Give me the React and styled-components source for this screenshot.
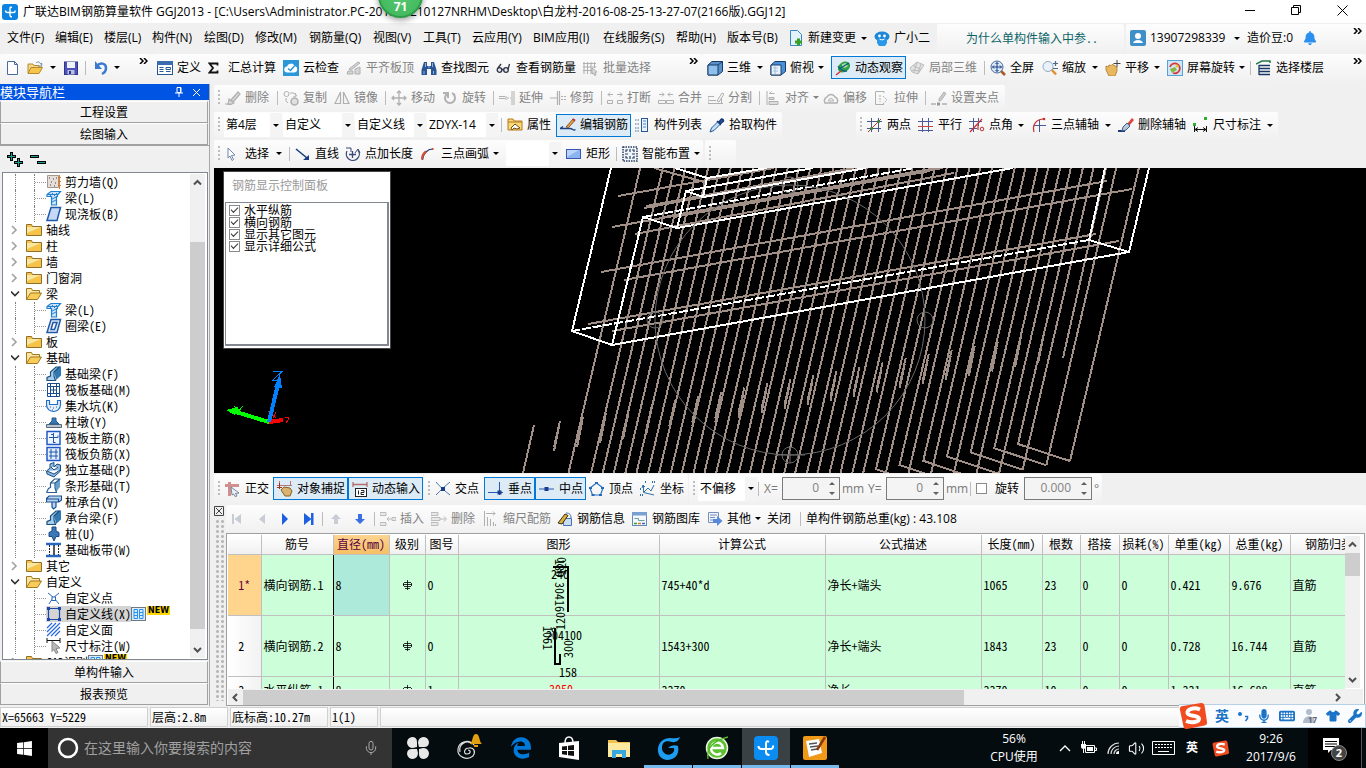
import React from "react";
import styled, { createGlobalStyle, css } from "styled-components";
import {
  FaWindows,
  FaEdgeLegacy,
  FaMicrophone,
  FaKeyboard,
  FaShirt,
  FaWrench,
  FaBell,
} from "react-icons/fa6";
import { Mic, Volume2 } from "lucide-react";

const uiFont = `"Open Sans", "Noto Sans CJK SC", sans-serif`;
const songFont = `"Noto Sans Mono CJK SC", "Liberation Serif", "Noto Sans CJK SC", monospace`;

const GlobalStyle = createGlobalStyle`
  * {
    box-sizing: border-box;
  }
  body {
    margin: 0;
    overflow: hidden;
    background: #f0f0f0;
    color: #000;
    font-family: ${uiFont};
    font-size: 12px;
    line-height: 16px;
  }
  button, input, select {
    font: inherit;
    color: inherit;
    margin: 0;
  }
`;

/* ---------- icons ---------- */

const BLUE = "#2058a8";
const GREY = "#b0b0b0";

const glyphs = {
  logo: (
    <>
      <rect width="16" height="16" rx="3" fill="#0a84e0" />
      <path d="M10 3.500q-2-1-2 1V11q0 2 2 1.800M3.500 6.500q0 2 2 2h6q2 0 1.500-2" fill="none" stroke="#fff" strokeWidth="1.400" />
    </>
  ),
  newFile: <path d="M2.500 1.500h7l3 3v10h-10zM9.500 1.500v3h3" fill="#fff" stroke="#4a6a98" />,
  open: (
    <>
      <path d="M1 13V4h5l1 1.500h5V8" fill="#f6d68a" stroke="#b88a30" />
      <path d="M1 13.500L4 7.500h11.500L12 13.500z" fill="#f5c54c" stroke="#b88a30" />
      <path d="M9 3c2-2 4-1 4.500 1l1.200-.8v3H12" fill="none" stroke="#6b87a8" />
    </>
  ),
  save: (
    <>
      <rect x="1.500" y="2" width="13" height="12.500" fill="#4c52b8" stroke="#30368c" />
      <rect x="4" y="2" width="8" height="6" fill="#f0f2fa" />
      <rect x="4.500" y="10" width="7" height="4.500" fill="#b8c0dc" />
      <rect x="6" y="11" width="2" height="3" fill="#30368c" />
    </>
  ),
  undo: (
    <>
      <path d="M4 6c3-4 9-3 9 2 0 3-2 5-4 6" fill="none" stroke="#3c7ad0" strokeWidth="2.500" />
      <path d="M2 1v8h7z" fill="#3c7ad0" />
    </>
  ),
  define: (
    <>
      <rect x=".5" y="1.500" width="15" height="13" fill="#fff" stroke="#285898" />
      <path d="M0 1h16v4H0z" fill="#3a6ab0" />
      <path d="M2.500 7.500h4M2.500 9.500h4M2.500 11.500h4M9 7.500h4.500v2H9zM9 11.500h4.500" stroke="#285898" fill="none" />
    </>
  ),
  sigma: <path d="M9.500 5.500V3.500H1.500L5 8l-3.500 4.500h8v-2" fill="none" stroke="#111" strokeWidth="1.800" />,
  cloud: (
    <>
      <rect width="16" height="16" fill="#2a98d8" />
      <path d="M4.500 12.500a3 3 0 0 1-.5-6 4 4 0 0 1 7.500-.5 3.300 3.300 0 0 1 0 6.500z" fill="#fff" />
      <path d="M5 8.500l2.500 2 4-4.500" fill="none" stroke="#2a98d8" strokeWidth="1.500" />
    </>
  ),
  slabDim: <path d="M1 14h6v-3H2zM3 9l9-7 2 1-9 7zM9 9v5h5V7z" fill="#d4d4d4" stroke="#b0b0b0" />,
  binoculars: (
    <>
      <path d="M3 2h3v4h4V2h3l2.500 8v5H10V9H6v6H.5v-5z" fill="#2a5694" />
      <path d="M3 11v3M12.500 11v3M4.500 3v4M11.500 3v4M7 7h2" stroke="#8ab4e8" />
    </>
  ),
  glasses: (
    <>
      <circle cx="3.500" cy="10" r="2.300" fill="#dce8f4" stroke="#334" strokeWidth="1.300" />
      <circle cx="10" cy="10" r="2.300" fill="#dce8f4" stroke="#334" strokeWidth="1.300" />
      <path d="M5.800 9.500h2M2 8l3-4M12 9.500L13.500 4" stroke="#334" fill="none" strokeWidth="1.300" />
    </>
  ),
  gridDim: (
    <>
      <path d="M1 2v12M4.500 2v12M8 2v12M11.500 2v6M0 3.500h13M0 7h13M0 10.500h9" stroke={GREY} fill="none" />
      <path d="M9 8l5 4-2 .5 1 2.500-1.500.5-1-2.500L9 14z" fill="#ddd" stroke="#999" strokeWidth=".7" />
    </>
  ),
  cube: (
    <>
      <path d="M1 5l4-3.500h10.500v10L11 15H1z" fill="#5a90cc" stroke="#183c68" />
      <path d="M1 5h10v10H1z" fill="#8fc0ec" stroke="#183c68" />
      <path d="M11 5l4.500-3.500" stroke="#183c68" />
    </>
  ),
  cubeTop: (
    <>
      <path d="M1 5l4-3.500h10.500v10L11 15H1z" fill="#4a90d8" stroke="#183c68" />
      <path d="M1 5h10v10H1z" fill="#eaf3fc" stroke="#183c68" />
      <path d="M3 8h5M3 11h5M5 6v8" stroke="#a0c0e0" />
    </>
  ),
  orbit: (
    <>
      <ellipse cx="9" cy="7" rx="6.500" ry="5" fill="#2fa048" transform="rotate(-35 9 7)" />
      <path d="M7 4l4-1 2 3-3 2-3-1z" fill="#a8e0a0" />
      <path d="M3 6c2 3 5 6 9 5M4 9l10-6" stroke="#0c5a88" strokeWidth="1.200" fill="none" />
      <path d="M1 15l5-4" stroke="#d03030" strokeWidth="1.500" />
    </>
  ),
  partDim: (
    <path d="M1 8l7-6 7 3-6 9-6-2zM4 5.500l8 4M3 10l8 1M8 2L5 12M12 4L9 13" fill="#e4e4e4" stroke="#bbb" />
  ),
  zoomAll: (
    <>
      <path d="M10.500 10.500l4.500 4.500" stroke="#a85820" strokeWidth="2.500" />
      <circle cx="7" cy="7" r="6" fill="#dceafa" stroke="#486898" />
      <path d="M7 2.500v9M2.500 7h9M5.500 4L7 2.500 8.500 4M5.500 10L7 11.500 8.500 10M4 5.500L2.500 7 4 8.500M10 5.500L11.500 7 10 8.500" stroke="#183c80" fill="none" />
    </>
  ),
  zoom: (
    <>
      <path d="M9.500 9.500l4.500 5" stroke="#e09030" strokeWidth="2.500" />
      <circle cx="6" cy="6.500" r="5" fill="#e8f2fc" stroke="#98a8b8" />
      <path d="M11 3.500h5M13.500 1v5M11 8.500h5" stroke="#486890" strokeWidth="1.200" />
    </>
  ),
  hand: (
    <>
      <path d="M1 6l2 1 1-2 2 .5 1-1 2 .5 1 1 2 1v4l-2 5H4L1 10z" fill="#e8b860" stroke="#a87828" strokeWidth=".8" />
      <path d="M12 0v7M8.500 3.500h7" stroke="#444" />
    </>
  ),
  screenRotate: (
    <>
      <rect x=".5" y=".5" width="15" height="15" fill="#cfe6f8" stroke="#58a0d8" />
      <path d="M3 7a5 5 0 1 1 3 6" fill="none" stroke="#d83838" strokeWidth="1.800" />
      <path d="M3 9l5-2 2 3-5 3z" fill="#88b840" />
      <circle cx="10" cy="6" r="1.500" fill="#e8c830" />
    </>
  ),
  floors: (
    <>
      <path d="M0 4l6-3h8v2" fill="none" stroke="#287848" strokeWidth="1.500" />
      <path d="M3 5.500h11M3 8.500h11M3 11.500h11M3 14.500h11M3 5v10" stroke="#183868" strokeWidth="1.300" />
    </>
  ),
  docAdd: (
    <>
      <path d="M2.500.5h7l4 4v11h-11z" fill="#e4f2fc" stroke="#3888c8" />
      <path d="M10.500 8.500v7M7 12h7" stroke="#38a028" strokeWidth="3" />
    </>
  ),
  mascot: (
    <>
      <ellipse cx="8" cy="6.500" rx="7.500" ry="5" fill="#1e88d8" />
      <path d="M3 9h10v4l-2 3H5l-2-3z" fill="#2898e8" />
      <circle cx="5.500" cy="6" r="1.400" fill="#fff" />
      <circle cx="10.500" cy="6" r="1.400" fill="#fff" />
      <path d="M5.500 9q2.500 2 5 0" stroke="#fff" fill="none" />
    </>
  ),
  user: (
    <>
      <rect width="16" height="16" rx="2" fill="#3f90c8" />
      <circle cx="8" cy="6" r="3" fill="#fff" />
      <path d="M3 13c1-4 9-4 10 0z" fill="#fff" />
    </>
  ),
  brushDim: <path d="M0 14h7M6 10l7-8 2 2-7 8zM4 9l5 4-3 1.500H3z" fill="#d8d8d8" stroke={GREY} strokeWidth="1.200" />,
  copyDim: (
    <>
      <circle cx="3.500" cy="4" r="2.500" fill="none" stroke={GREY} />
      <circle cx="11.500" cy="11.500" r="3.500" fill="#e0e0e0" stroke={GREY} strokeWidth="1.500" />
      <path d="M7 3h4l2 2.500M12 3l1.500 3-3 .5M3 8v3l2 2" fill="none" stroke={GREY} />
    </>
  ),
  mirrorDim: <path d="M1 13.500L6.500 2v11.500zM9.500 2L15 13.500H9.500z" fill="none" stroke={GREY} strokeWidth="1.200" />,
  moveDim: <path d="M8 1v14M1 8h14M6 3l2-2 2 2M6 13l2 2 2-2M3 6L1 8l2 2M13 6l2 2-2 2" fill="none" stroke={GREY} strokeWidth="1.300" />,
  rotateDim: <path d="M5 4a5 5 0 1 0 6 0M6 8V3H1M10 3l3 2" fill="none" stroke={GREY} strokeWidth="2" />,
  extendDim: <path d="M0 8.500h6M0 6.500h6M8 8h2M11 8h1M13 1v14M15 1v14M7 6v4" fill="none" stroke={GREY} />,
  trimDim: <path d="M0 8h7M7.500 1v14M9.500 1v14M11 6.500h2M14 6.500h2M11 9.500h2M14 9.500h2" fill="none" stroke={GREY} strokeWidth="1.200" />,
  breakDim: <path d="M1 4.500h5M10 4.500h5M3 2.500L1 4.500l2 2M13 2.500l2 2-2 2M.5 10.500h5v3h-5zM10.500 10.500h5v3h-5z" fill="none" stroke={GREY} />,
  mergeDim: <path d="M1 4.500h5M10 4.500h5M4 2.500l2 2-2 2M12 2.500l-2 2 2 2M.5 10.500h7v3h-7zM8.500 10.500h7v3h-7z" fill="none" stroke={GREY} />,
  splitDim: <path d="M0 6.500h6M0 13.500h15M0 6.500v7M9 11l5-8 2 1-5 8zM13.500 8v5M1 10.500h7" fill="none" stroke={GREY} />,
  alignDim: <path d="M2 1v14M4.500 3.500h5M4.500 3.500l2-2M4 7.500h5v2H4zM4 11.500h9v3H4z" fill="#ddd" stroke={GREY} />,
  offsetDim: (
    <>
      <path d="M2 13a4 4 0 0 1 2-6 4.500 4.500 0 0 1 8 0 4 4 0 0 1 2 6z" fill="none" stroke={GREY} strokeWidth="1.500" />
      <path d="M5.500 11a2.500 2.500 0 0 1 5 0z" fill="none" stroke={GREY} />
    </>
  ),
  stretchDim: (
    <>
      <path d="M10 3V1.500H1.500v13H10" fill="none" stroke={GREY} />
      <path d="M6 5v7M9 6l4 4M9 14l4-4" fill="none" stroke={GREY} strokeDasharray="2 1" />
    </>
  ),
  gripDim: (
    <>
      <path d="M0 14h5M11 14h5" stroke={GREY} strokeWidth="1.500" />
      <rect x="6" y="12.500" width="3" height="3" fill="#999" />
      <path d="M8 9l5-7 2 1.500-5 7-2 .5z" fill="#ccc" stroke={GREY} />
    </>
  ),
  props: (
    <>
      <path d="M1 13V2h5l1 2h8v9z" fill="#f8d878" stroke="#b87818" />
      <path d="M1 5h14" stroke="#b87818" />
      <path d="M4 11l4-4 5 4-3 1-3-1-2 2z" fill="#fff" stroke="#705018" />
    </>
  ),
  editBar: (
    <>
      <path d="M0 11.500h10c3 0 3 3 5.500 1M0 11.500l3-2" fill="none" stroke="#204080" strokeWidth="1.300" />
      <path d="M6 10l7-8 2 1.500-6.500 7z" fill="#e8a040" stroke="#704020" strokeWidth=".8" />
      <path d="M12.500 2l2.500 1.500" stroke="#c03030" strokeWidth="2" />
    </>
  ),
  listPane: (
    <>
      <path d="M1 3h4M1 7h4M1 11h4M1 14h4" stroke="#487098" strokeDasharray="1.500 1" />
      <rect x="7.500" y="1.500" width="6" height="13" fill="#e8f2fc" stroke="#285898" />
      <path d="M9 4h3M9 7h3M9 10h3" stroke="#4880c8" />
    </>
  ),
  dropper: (
    <>
      <path d="M1 15l1.500-4L9 4.500l2.500 2.500L5 13.500z" fill="#bfe0f8" stroke="#285898" />
      <path d="M8 4l4 4M9.500 5.500l3-3.500a1.800 1.800 0 0 1 2 2L11 7z" fill="#2858a0" stroke="#183878" strokeWidth="1.500" />
    </>
  ),
  axisTwo: (
    <>
      <path d="M0 4.500h15M0 11.500h14M4.500 1v14M11.500 1v14" stroke="#4a5a88" />
      <path d="M1 15L14 2" stroke="#c83030" />
      <circle cx="4.500" cy="11.500" r="1.500" fill="#308838" />
      <circle cx="11.500" cy="4.500" r="1.500" fill="#308838" />
    </>
  ),
  axisPar: (
    <>
      <path d="M0 4.500h15M4.500 1v14M10.500 1v14M0 13.500h15" stroke="#4a5a98" />
      <path d="M0 9.500h15" stroke="#c84848" />
    </>
  ),
  axisAngle: (
    <>
      <path d="M0 4.500h13M0 11.500h8M4.500 1v14M9.500 1v8" stroke="#4a5a98" />
      <path d="M1 15L13 2M9 8v5" stroke="#c83030" strokeWidth="1.200" />
      <circle cx="13" cy="12" r="1.800" fill="none" stroke="#c83030" />
    </>
  ),
  axisThree: (
    <>
      <path d="M3 8.500h12M8.500 3v12" stroke="#4a5a98" />
      <path d="M3 15C1 8 5 2 13 2" fill="none" stroke="#c83030" strokeWidth="1.200" />
      <circle cx="13" cy="2" r="1.300" fill="#c83030" />
    </>
  ),
  brush: (
    <>
      <path d="M0 14h7" stroke="#203878" strokeWidth="2" />
      <path d="M9 7l5-6 2 2-5 6z" fill="#d84838" />
      <path d="M5 10l4-4 3 3-4 4-4 1z" fill="#b8c8d8" stroke="#386090" />
    </>
  ),
  dim: (
    <>
      <path d="M1.500 9v6M13.500 9v6M2 12.500h11" stroke="#111" />
      <path d="M5 10.500l-3 2 3 2M10 10.500l3 2-3 2" fill="none" stroke="#111" />
      <path d="M0 7.500h3M11 1.500h3" stroke="#30b030" strokeWidth="3" />
    </>
  ),
  cursor: <path d="M3 2l7 7-3.500.5 2 4-1.500 1-2-4.500L3 12z" fill="#fff" stroke="#7088a8" />,
  line: (
    <>
      <path d="M1 3l11 9" stroke="#183c80" strokeWidth="1.600" />
      <path d="M14 9v5H8z" fill="#183c80" />
    </>
  ),
  arcLen: (
    <>
      <path d="M2 5a6.500 6.500 0 1 0 11-1M7.500 5v7M4 8.500h7" fill="none" stroke="#384878" strokeWidth="1.300" />
      <path d="M1 2h5v4M10 7l3-4 2 4" fill="none" stroke="#384878" />
    </>
  ),
  arc: (
    <>
      <path d="M1.500 14C2 8 6 3 12 3" fill="none" stroke="#283c80" strokeWidth="1.200" />
      <path d="M1 13.500C1 9 3 7 5 5.500M11 3h1.500" fill="none" stroke="#d05038" strokeWidth="2.200" />
    </>
  ),
  rect: (
    <>
      <rect x=".5" y="3.500" width="14" height="9" fill="#8cb4f0" stroke="#3858b0" />
      <path d="M1 11L13 4H1z" fill="#bcd4fa" />
    </>
  ),
  smart: (
    <>
      <rect x="1" y="1" width="14" height="14" fill="#eef4fa" stroke="#283c60" strokeWidth="1.500" strokeDasharray="1.500 1" />
      <path d="M4 6V4h2M10 4h2v2M4 10v2h2M10 12h2v-2M8 3v3M8 10v3M3 8h3M10 8h3" fill="none" stroke="#283c60" strokeWidth="1.200" />
    </>
  ),
  ortho: (
    <>
      <path d="M0 4.500h14M4.500 1v14" stroke="#d09090" strokeWidth="3" />
      <path d="M6 6l8 6-3.500.5L12 15l-2 .5L8.500 13 7 14z" fill="#e8f0f8" stroke="#788898" />
    </>
  ),
  snapHand: (
    <>
      <path d="M2.500 0v8M13.500 0v5M0 4.500h15" stroke="#b07878" />
      <path d="M4 9l3-3 6 1 2 3-2 5H8z" fill="#d8b470" stroke="#886020" />
      <path d="M2.500 2v6M0 6.500h5" stroke="#a03020" />
    </>
  ),
  dynInput: (
    <>
      <path d="M1 1v5M1 3.500h14M15 1v5" stroke="#b07070" strokeWidth="1.300" />
      <rect x="3.500" y="7.500" width="11" height="8" fill="#fff" stroke="#222" />
      <path d="M6.500 9.500v4M9 9.500h3v2H9v2h3" stroke="#222" fill="none" />
    </>
  ),
  cross: (
    <>
      <path d="M1 1c4 5 9 9 14 13M15 1C10 5 5 10 1 14" stroke="#4878a8" fill="none" />
      <rect x="6" y="6" width="4" height="4" fill="#183c90" />
    </>
  ),
  perp: (
    <>
      <path d="M0 11.500h15M11.500 1v13" stroke="#2858b0" />
      <rect x="9.500" y="9.500" width="4" height="4" fill="#183c90" />
    </>
  ),
  mid: (
    <>
      <path d="M0 8h15" stroke="#2858b0" />
      <rect x="5.500" y="6" width="4" height="4" fill="#183c90" />
    </>
  ),
  vertex: (
    <>
      <path d="M7.500 2L14 7l-2.500 7h-8L1 7z" fill="none" stroke="#2878c0" strokeWidth="1.200" />
      <path d="M6 2h3M0 7h3M12 7h3M2.500 14h3M10 14h3" stroke="#2868b8" strokeWidth="2" />
    </>
  ),
  coord: (
    <>
      <path d="M3.500 4v7.500L14 14M4 11l4-4 3 3 3-6M3 4L2 7M3 4l2 2" fill="none" stroke="#3070a8" />
      <path d="M0 8h2M0 14h3M12 1h3M5 1h2" stroke="#3070a8" strokeWidth="2" strokeDasharray="1 1" />
    </>
  ),
  firstDim: <path d="M3 3v10h2V3zM12 3v10L5.500 8z" fill="#c8ccd4" />,
  prevDim: <path d="M11 3v10L5 8z" fill="#c8ccd4" />,
  next: <path d="M5 2v12l6-6z" fill="#1c5fe0" />,
  last: <path d="M2 2v12l7.500-6zM9 2h2.500v12H9z" fill="#1c5fe0" />,
  upDim: <path d="M8 3l5 5h-3v5H6V8H3z" fill="#c8ccd4" />,
  down: <path d="M8 13L3 8h3V3h4v5h3z" fill="#3a70e0" />,
  insertDim: <path d="M0 1.500h6v3H0zM0 11.500h6v3H0zM7 8h5M9 6L7 8l2 2M12 6.500h4v3h-4z" fill="#e8e8e8" stroke="#bcbcbc" />,
  removeDim: <path d="M0 1.500h7v3H0zM0 6.500h9v3H0zM0 11.500h7v3H0zM9 8h5M13 5.500l2.500 2.500L13 10.500" fill="#e8e8e8" stroke="#bcbcbc" />,
  scaleDim: <path d="M1.500 0v15M3 2.500h9M10 .5l2 2-2 2M4.500 6v9M7.500 8v7M10.500 11v4M12.500 13v2" fill="none" stroke={GREY} />,
  barInfo: (
    <>
      <path d="M6.500 7.500h8v7h-8z" fill="#c8dcf4" stroke="#4870b0" />
      <path d="M1 12L8 3l3 1.500L5 13z" fill="#d8b040" stroke="#403010" />
      <path d="M9 2c4 0 5 2 5 5" fill="none" stroke="#4870b0" />
    </>
  ),
  barLib: (
    <>
      <rect x=".5" y="1.500" width="14" height="13" fill="#f4f8fc" stroke="#6888b0" />
      <path d="M0 1h15v3.500H0z" fill="#78a0d0" />
      <path d="M2.500 7.500h4v2h6" fill="none" stroke="#68a0a0" />
      <path d="M2 12.500h3" stroke="#30a040" strokeWidth="1.500" />
      <path d="M6 12.500h3" stroke="#e07820" strokeWidth="1.500" />
      <path d="M10 12.500h3" stroke="#3868d0" strokeWidth="1.500" />
    </>
  ),
  other: (
    <>
      <path d="M1.500 1.500h10v10h-10z" fill="#eef4fc" stroke="#7890b8" />
      <path d="M3 4h7M3 6.500h5M3 9h4" stroke="#7890b8" />
      <path d="M6 8h4V5l5.500 5-5.500 5v-3H6z" fill="#5a88dc" />
    </>
  ),
  /* tree */
  wallDots: (
    <>
      <path d="M1.500 1.500h11v12h-11z" fill="#e4ddd8" stroke="#a09890" />
      <path d="M3 4h1M7 5h1M5 8h1M9 9h1M4 11h1M10 4h1M8 12h1" stroke="#444" />
      <path d="M13.500 1v14M12 3.500h3M12 7.500h3M12 11.500h3" stroke="#e07820" />
    </>
  ),
  beam: (
    <>
      <path d="M1 4.500L5 1.500h9.500L11.500 5v1.500h-1V15h-5V6.500H1z" fill="#cfe4fa" stroke="#2080d0" strokeWidth="1.200" />
      <path d="M1.500 4.500h10L14 2M6 9l4-2M6 12l4-2M4 6l3-3M8 6l3-3" fill="none" stroke="#2080d0" />
    </>
  ),
  slab: <path d="M5 1.500h9.500L11 14.500H1z" fill="#c4d8f8" stroke={BLUE} strokeWidth="1.500" />,
  ring: (
    <path d="M5 1.500h9.500L11 14.500H1zM7 4.500h4L8.500 11.500H5z" fill="#dce8fa" fillRule="evenodd" stroke={BLUE} strokeWidth="1.500" />
  ),
  foundBeam: (
    <>
      <path d="M8 4.500L13 .5h2v9L10 14z" fill="#2f78b0" />
      <path d="M1 14.500v-3l3.500-1.500V6L10 1h3L8 6v4l1.500 4.500z" fill="#a8cdea" stroke="#1a5080" strokeWidth="1.200" />
    </>
  ),
  raft: (
    <path d="M1.500 1.500h12v13h-12zM4.500 4.500h6v7h-6zM4.500 2v12M10.500 2v12M2 4.500h11M2 11.500h11M7.500 4v8M4 8h7" fill="none" stroke="#1c4c90" />
  ),
  pit: (
    <>
      <path d="M.5 2.500h3v4h8v-4h3v4c0 5-4 7-7 7s-7-2-7-7z" fill="#e4eefa" stroke="#2070c8" strokeWidth="1.200" />
      <path d="M4 9h1M7 10h1M10 9h1M6 12h1" stroke="#2060a8" />
    </>
  ),
  pier: (
    <>
      <path d="M.5 10.500h15v3H.5z" fill="#b8c4d0" stroke="#586878" />
      <path d="M3 10l3-3V4h4v3l3 3z" fill="#3878b8" stroke="#285888" />
    </>
  ),
  rebarMain: (
    <>
      <rect x="1" y="1.500" width="13" height="13" fill="#f0f6ff" stroke="#2058c8" strokeWidth="1.500" />
      <path d="M7.500 3v10M3 7.500h9v-2M7.500 12.500h2M5 4.500h2" fill="none" stroke="#2058a8" />
    </>
  ),
  rebarNeg: (
    <>
      <rect x="1" y="1.500" width="13" height="13" fill="#e4eefa" stroke="#2058c8" strokeWidth="1.500" />
      <path d="M5 3v10M10 3v10M3 6h9M3 10h9" fill="none" stroke="#2058a8" />
    </>
  ),
  isolated: <path d="M.5 9L4 6V2l4-1.500V5l3-3 3.500 1v6L8 15l-7-3zM1 9l7 3 6-4M5 5l3 3 4-3" fill="#8cb8e0" stroke="#1a5080" />,
  strip: (
    <>
      <path d="M9 5l5-4v8l-4 5z" fill="#6aa0cc" />
      <path d="M.5 14.500l2-4 2-1V5l4-4h6M9 5l5-4M4.500 5H9v5l1.500 4.500H.5" fill="none" stroke="#2a5c90" strokeWidth="1.200" />
    </>
  ),
  cap: <path d="M.5 4.500L3 2h12.500v4L13 8H.5zM.5 5h12v3M6 8v5l1.500 2L10 13V8" fill="#b8d4f0" stroke="#1a5090" strokeWidth="1.200" />,
  pile: <path d="M6 1h4v4l3 1.500v4H10L8 15l-2-4.500H3v-4L6 5z" fill="#3c78b8" stroke="#1a4880" />,
  band: (
    <>
      <path d="M0 2h15M0 14h15" stroke="#2868c0" strokeWidth="2.500" />
      <path d="M3.500 3v10M12.500 3v10" stroke="#222" strokeDasharray="2 1" />
      <path d="M8 3v10" stroke="#222" strokeWidth="1.500" />
    </>
  ),
  point: (
    <>
      <path d="M2 3c4 3 8 7 11 11M13 3C9 6 5 10 3 14" fill="none" stroke="#2868b8" />
      <rect x="6" y="7" width="3.500" height="3.500" fill="#fff" stroke="#2868b8" />
    </>
  ),
  poly: (
    <>
      <path d="M2.500 2.500h11v11h-11z" fill="none" stroke="#1c48a8" strokeWidth="1.200" />
      <path d="M1 2.500h3M12 2.500h3M1 13.500h3M12 13.500h3" stroke="#1c48a8" strokeWidth="3" />
    </>
  ),
  hatch: <path d="M1 6l5-5M1 10l9-9M1 14L14 1M5 14l9-9M9 14l5-5" stroke="#2868e0" strokeWidth="1.200" />,
  dimPick: (
    <>
      <path d="M1 0v5M14 0v5M1 2.500h13" stroke="#111" />
      <path d="M6 3l8 7-4 .5 2 4-2 1-2-4-2 2z" fill="#b8b8b8" stroke="#888" />
    </>
  ),
  folder: (
    <>
      <path d="M.5 13.500v-11h5l1 2h9v9z" fill="#f4c348" stroke="#907028" />
      <path d="M1 11V5h14z" fill="#fbe6a0" />
    </>
  ),
  folderOpen: (
    <>
      <path d="M.5 13.500v-11h5l1 2h7v3" fill="#fbe4a0" stroke="#a07820" />
      <path d="M.5 13.500l4-6.500h11l-4 6.500z" fill="#f9cc58" stroke="#a07820" />
    </>
  ),
  book: (
    <>
      <rect x=".5" y="1.500" width="14" height="13" fill="#d8ecfc" stroke="#707880" />
      <path d="M3 3.500h3.500v9H3zM8.500 3.500H12v9H8.500zM3 6.500h3M9 6.500h3M3 9.500h3M9 9.500h3" stroke="#2890f0" fill="none" />
    </>
  ),
};

const Svg = styled.svg`
  flex: none;
  display: block;
`;

const Icon = ({ name, size = 16 }) => (
  <Svg width={size} height={size} viewBox="0 0 16 16" aria-hidden="true">
    {glyphs[name]}
  </Svg>
);

/* ---------- shared toolbar parts ---------- */

const Toolbar = styled.div`
  display: flex;
  align-items: center;
  height: ${(p) => p.$h}px;
  padding-bottom: ${(p) => p.$pb || 0}px;
  overflow: hidden;
`;

const Strip = styled.div`
  display: flex;
  align-items: center;
  align-self: stretch;
  margin: 1px 0;
  padding-left: ${(p) => p.$pad || 0}px;
  ${(p) => p.$ml && `margin-left: ${p.$ml}px;`}
  ${(p) => p.$w && `width: ${p.$w}px;`}
  ${(p) => p.$grow && "flex: 1;"}
  background: linear-gradient(#fdfdfd, #f1f1f1);
  border-radius: 2px;
  white-space: nowrap;
`;

const Grip = styled.span`
  flex: none;
  width: 2px;
  height: 16px;
  margin: 0 ${(p) => p.$gap || 5}px 0 4px;
  background: repeating-linear-gradient(#bdbdbd 0 2px, transparent 2px 4px);
`;

const Separator = styled.span`
  flex: none;
  width: 1px;
  height: 14px;
  margin-right: 5px;
  background: #bcbcbc;
`;

const ToolButton = styled.button`
  flex: none;
  display: flex;
  align-items: center;
  gap: 4px;
  height: 23px;
  padding: 0;
  width: ${(p) => p.$w}px;
  border: 0;
  background: none;
  white-space: nowrap;
  text-align: left;
  ${(p) => p.$dim && "color: #838383;"}
  ${(p) =>
    p.$on &&
    css`
      padding-left: 3px;
      border: 1px solid #0078d7;
      background: #dcebf6;
    `}
`;

const Space = styled.span`
  flex: none;
  width: ${(p) => p.$w}px;
`;

const Caret = styled.span`
  margin: 0 ${(p) => (p.$flush ? 2 : 7)}px 0 auto;
  border: 3px solid transparent;
  border-top-color: ${(p) => (p.$dim ? "#838383" : "#000")};
  border-bottom: 0;
`;

const MoreButton = styled.button`
  align-self: flex-start;
  margin: 4px 4px 0 auto;
  padding: 0;
  border: 0;
  background: none;
`;

const More = () => (
  <MoreButton aria-label="更多">
    <Svg width="9" height="6" viewBox="0 0 9 6">
      <path d="M1 0l3 3-3 3M5 0l3 3-3 3" fill="none" stroke="#000" strokeWidth="1.500" />
    </Svg>
  </MoreButton>
);

const ComboWrap = styled.label`
  position: relative;
  flex: none;
  display: flex;
  align-items: center;
  width: ${(p) => p.$w}px;
  height: 24px;
  margin-right: 1px;
  background: linear-gradient(to left, #f4f4f4 0 12px, #fff 12px);

  select {
    width: 100%;
    height: 24px;
    padding: 0 0 0 2px;
    border: 0;
    background: none;
    appearance: none;
  }
  span {
    position: absolute;
    right: 3px;
    margin: 0;
  }
`;

const Combo = ({ value, label, w }) => (
  <ComboWrap $w={w}>
    <select aria-label={label}>
      <option>{value}</option>
    </select>
    <Caret />
  </ComboWrap>
);

// "|" is a divider and a bare number is a gap
const Tools = ({ items }) =>
  items.map((item, i) => {
    if (item === "|") return <Separator key={i} />;
    if (typeof item === "number") return <Space key={i} $w={item} />;
    return (
      <ToolButton key={i} $w={item.w} $dim={item.dim} $on={item.on}>
        {item.icon && <Icon name={item.icon} />}
        {item.text}
        {item.menu && <Caret $dim={item.dim} $flush={item.flush} />}
      </ToolButton>
    );
  });

/* ---------- window frame ---------- */

const Page = styled.div`
  display: flex;
  flex-direction: column;
  height: 100vh;
  min-height: 600px;
`;

const TitleBar = styled.header`
  position: relative;
  display: flex;
  align-items: center;
  height: 23px;
  padding-left: 2px;
  background: #fff;

  h1 {
    margin: 0 auto 0 5px;
    font-size: 12px;
    font-weight: 400;
    white-space: nowrap;
  }
`;

const WindowButton = styled.button`
  width: 46px;
  height: 22px;
  padding: 0 2px 2px 0;
  border: 0;
  background: none;
  display: grid;
  place-items: center;
`;

const SpeedBall = styled.div`
  position: absolute;
  left: 378px;
  top: -27px;
  width: 45px;
  height: 45px;
  padding-top: 24px;
  border: 2px solid #2f9a48;
  border-radius: 50%;
  background: radial-gradient(#58c870, #3cb458);
  box-shadow: 0 2px 6px rgba(0, 0, 0, 0.4);
  color: #fff;
  font-weight: 700;
  text-align: center;
`;

const Menu = styled.nav`
  display: flex;
  align-items: center;
  height: 30px;
  padding-left: 7px;
`;

const MenuItem = styled.button`
  flex: none;
  padding: 0;
  width: ${(p) => p.$w}px;
  border: 0;
  background: none;
  text-align: left;
  white-space: nowrap;
`;

const Ticker = styled.a`
  color: #0c6468;
  font-family: ${songFont};
  text-decoration: none;
`;

const menus = [
  ["文件(F)", 48],
  ["编辑(E)", 49],
  ["楼层(L)", 48],
  ["构件(N)", 52],
  ["绘图(D)", 51],
  ["修改(M)", 54],
  ["钢筋量(Q)", 64],
  ["视图(V)", 50],
  ["工具(T)", 49],
  ["云应用(Y)", 61],
  ["BIM应用(I)", 70],
  ["在线服务(S)", 73],
  ["帮助(H)", 51],
  ["版本号(B)", 61],
];

const MenuBar = () => (
  <Menu>
    {menus.map(([label, w]) => (
      <MenuItem key={label} $w={w}>
        {label}
      </MenuItem>
    ))}
    <Tools
      items={[
        { icon: "docAdd", text: "新建变更", w: 86, menu: true },
        { icon: "mascot", text: "广小二", w: 63 },
      ]}
    />
    <Strip $w={187} $pad={29}>
      <Ticker href="#faq">为什么单构件输入中参..</Ticker>
    </Strip>
    <Strip $pad={4} $ml={2} $grow>
      <Tools
        items={[
          { icon: "user", text: "13907298339", w: 117, menu: true },
          { text: "造价豆:0", w: 56 },
        ]}
      />
      <FaBell size={14} color="#2a90f0" />
      <More />
    </Strip>
  </Menu>
);

const MainToolbar = () => (
  <Toolbar $h={31} $pb={2}>
    <Strip $pad={5} $w={152}>
      <Tools
        items={[
          { icon: "newFile", w: 22 },
          { icon: "open", w: 36, menu: true },
          { icon: "save", w: 22 },
          "|",
          2,
          { icon: "undo", w: 34, menu: true },
        ]}
      />
      <More />
    </Strip>
    <Strip $pad={5} $w={550}>
      <Tools
        items={[
          { icon: "define", text: "定义", w: 51 },
          { icon: "sigma", text: "汇总计算", w: 75 },
          { icon: "cloud", text: "云检查", w: 63 },
          { icon: "slabDim", text: "平齐板顶", w: 75, dim: true },
          { icon: "binoculars", text: "查找图元", w: 75 },
          { icon: "glasses", text: "查看钢筋量", w: 87 },
          { icon: "gridDim", text: "批量选择", w: 75, dim: true },
        ]}
      />
      <More />
    </Strip>
    <Strip $pad={5} $grow>
      <Tools
        items={[
          { icon: "cube", text: "三维", w: 63, menu: true },
          { icon: "cubeTop", text: "俯视", w: 61, menu: true },
          { icon: "orbit", text: "动态观察", w: 75, on: true },
          3,
          { icon: "partDim", text: "局部三维", w: 75, dim: true },
          "|",
          { icon: "zoomAll", text: "全屏", w: 52 },
          { icon: "zoom", text: "缩放", w: 63, menu: true },
          { icon: "hand", text: "平移", w: 62, menu: true },
          { icon: "screenRotate", text: "屏幕旋转", w: 83, menu: true },
          "|",
          { icon: "floors", text: "选择楼层", w: 75 },
        ]}
      />
      <More />
    </Strip>
  </Toolbar>
);

/* ---------- module navigator ---------- */

const Navigator = styled.aside`
  flex: none;
  display: flex;
  flex-direction: column;
  width: 210px;
  margin-right: 4px;
  padding-bottom: 1px;
  font-family: ${songFont};
  border-right: 1px solid #a8a8a8;
`;

const NavTitle = styled.div`
  display: flex;
  align-items: center;
  height: 16px;
  margin-bottom: 1px;
  background: #0054e3;
  color: #fff;
  font-size: 13px;

  svg {
    margin-right: 8px;
  }
  svg:first-of-type {
    margin-left: auto;
  }
`;

const NavButton = styled.button`
  flex: none;
  height: 22px;
  margin: 0 1px 0 0;
  padding: 0;
  border: 1px solid #a0a0a0;
  border-top-color: #fff;
  background: #f0f0f0;
`;

const ExpandBar = styled.div`
  display: flex;
  align-items: center;
  gap: 7px;
  height: 27px;
  padding: 2px 0 0 7px;
  border-top: 1px solid #a0a0a0;
`;

const TreeBox = styled.div`
  flex: 1;
  min-height: 0;
  display: flex;
  margin: 0 1px 1px 2px;
  border: 1px solid #828790;
  background: #fff;
  overflow: hidden;
`;

const Tree = styled.ul`
  flex: 1;
  margin: 1px 0 0;
  padding: 0;
  list-style: none;
  white-space: nowrap;
`;

const TreeRow = styled.li`
  display: flex;
  align-items: center;
  height: 16px;
  padding-left: ${(p) => (p.$leaf ? 12 : 8)}px;

  mark {
    background: ${(p) => (p.$selected ? "#d4d4d4" : "none")};
  }
  b {
    align-self: flex-start;
    padding: 0 1px;
    background: #ffd800;
    font: 700 8px/9px "DejaVu Sans", sans-serif;
  }
`;

const Guide = styled.span`
  flex: none;
  width: 19px;
  height: 16px;
  border-left: 1px dotted #808080;
`;

const Branch = styled.span`
  flex: none;
  width: 12px;
  height: 16px;
  border-left: 1px dotted #808080;
  background: linear-gradient(90deg, #999 50%, transparent 50%) 0 8px / 2px 1px repeat-x;
`;

const TreeIcon = styled.span`
  flex: none;
  width: ${(p) => p.$w}px;
  background: ${(p) => (p.$selected ? "#d4d4d4" : "none")};
`;

const VScroll = styled.div`
  flex: none;
  display: flex;
  flex-direction: column;
  align-items: center;
  width: 15px;
  margin: 1px 2px 1px 0;
  background: #f0f0f0;
`;

const Thumb = styled.span`
  width: 100%;
  flex: ${(p) => p.$flex};
  background: #cdcdcd;
`;

const Track = styled.span`
  flex: ${(p) => p.$flex};
`;

const ArrowMark = ({ d }) => (
  <Svg width="15" height="17" viewBox="0 0 15 17">
    <path d={d} fill="none" stroke="#505050" strokeWidth="2" />
  </Svg>
);

const UP = "M4 10.500L7.500 7 11 10.500";
const DOWN = "M4 7L7.500 10.500 11 7";
const LEFT = "M9 5L5.500 8.500 9 12";
const RIGHT = "M6 5l3.500 3.500L6 12";

const treeRows = [
  ["wallDots", "剪力墙(Q)"],
  ["beam", "梁(L)"],
  ["slab", "现浇板(B)"],
  ["+", "轴线"],
  ["+", "柱"],
  ["+", "墙"],
  ["+", "门窗洞"],
  ["-", "梁"],
  ["beam", "梁(L)"],
  ["ring", "圈梁(E)"],
  ["+", "板"],
  ["-", "基础"],
  ["foundBeam", "基础梁(F)"],
  ["raft", "筏板基础(M)"],
  ["pit", "集水坑(K)"],
  ["pier", "柱墩(Y)"],
  ["rebarMain", "筏板主筋(R)"],
  ["rebarNeg", "筏板负筋(X)"],
  ["isolated", "独立基础(P)"],
  ["strip", "条形基础(T)"],
  ["cap", "桩承台(V)"],
  ["foundBeam", "承台梁(F)"],
  ["pile", "桩(U)"],
  ["band", "基础板带(W)"],
  ["+", "其它"],
  ["-", "自定义"],
  ["point", "自定义点"],
  ["poly", "自定义线(X)", "new", "selected"],
  ["hatch", "自定义面"],
  ["dimPick", "尺寸标注(W)"],
  ["+", "CAD识别", "new"],
];

const NewMark = () => (
  <>
    <Icon name="book" />
    <b>NEW</b>
  </>
);

const ModuleTree = () => (
  <Tree>
    {treeRows.map(([kind, label, isNew, selected], i) => {
      const folder = kind === "+" || kind === "-";
      return folder ? (
        <TreeRow key={i}>
          <TreeIcon $w={15}>
            <Svg width="9" height="10" viewBox="0 0 9 10">
              <path
                d={kind === "+" ? "M1 1l4 4-4 4" : "M0 2.500L4 6.500l4-4"}
                fill="none"
                stroke={kind === "+" ? "#a0a0a0" : "#303030"}
                strokeWidth="1.600"
              />
            </Svg>
          </TreeIcon>
          <TreeIcon $w={20}>
            <Icon name={kind === "+" ? "folder" : "folderOpen"} />
          </TreeIcon>
          <mark>{label}</mark>
          {isNew && <NewMark />}
        </TreeRow>
      ) : (
        <TreeRow key={i} $leaf $selected={selected}>
          <Guide />
          <Branch />
          <TreeIcon $w={19} $selected={selected}>
            <Icon name={kind} />
          </TreeIcon>
          <mark>{label}</mark>
          {isNew && <NewMark />}
        </TreeRow>
      );
    })}
  </Tree>
);

const ModuleNavigator = () => (
  <Navigator>
    <NavTitle>
      模块导航栏
      <Svg width="10" height="12" viewBox="0 0 10 12">
        <path d="M3 1.500h4v5H3zM6.500 1v6M1 7h8M5 7v4" fill="none" stroke="#fff" />
      </Svg>
      <Svg width="9" height="9" viewBox="0 0 9 9">
        <path d="M1 1l7 7M8 1L1 8" stroke="#fff" />
      </Svg>
    </NavTitle>
    <NavButton>工程设置</NavButton>
    <NavButton>绘图输入</NavButton>
    <ExpandBar>
      <Svg width="16" height="16" viewBox="0 0 16 16">
        <path d="M4.500 0v9M0 4.500h9M11.500 6v9M7 10.500h9" stroke="#000" strokeWidth="3" />
        <path d="M4.500 1v7M1 4.500h7M11.500 7v7M8 10.500h7" stroke="#20a090" />
      </Svg>
      <Svg width="16" height="16" viewBox="0 0 16 16">
        <path d="M0 4.500h9M7 10.500h9" stroke="#000" strokeWidth="3" />
        <path d="M1 4.500h7M8 10.500h7" stroke="#20a090" />
      </Svg>
    </ExpandBar>
    <TreeBox>
      <ModuleTree />
      <VScroll>
        <ArrowMark d={UP} />
        <Track $flex={51} />
        <Thumb $flex={386} />
        <Track $flex={12} />
        <ArrowMark d={DOWN} />
      </VScroll>
    </TreeBox>
    <NavButton>单构件输入</NavButton>
    <NavButton>报表预览</NavButton>
  </Navigator>
);

/* ---------- drawing area ---------- */

const Viewport = styled.section`
  position: relative;
  flex: 1;
  min-height: 0;
  background: #000;
  overflow: hidden;
`;

const Scene = styled.svg`
  display: block;
  width: 100%;
  height: 100%;
`;

const DisplayPanel = styled.fieldset`
  position: absolute;
  left: 9px;
  top: 3px;
  width: 168px;
  height: 178px;
  margin: 0;
  padding: 6px 1px 2px;
  display: flex;
  flex-direction: column;
  border: 1px solid #444;
  background: #fff;
  color: #9a9a9a;

  p {
    margin: 0 0 8px 7px;
  }
  div {
    flex: 1;
    padding: 1px 3px;
    border: 1px solid #828790;
    border-width: 1px 2px 2px 1px;
    color: #000;
    font-family: ${songFont};
  }
`;

const CheckRow = styled.label`
  display: flex;
  align-items: center;
  gap: 4px;
  height: 12px;
  line-height: 12px;
`;

const Check = styled.input.attrs({ type: "checkbox" })`
  appearance: none;
  flex: none;
  width: 11px;
  height: 11px;
  border: 1px solid #8a8a8a;
  background: #fff;

  &:checked::after {
    content: "";
    display: block;
    width: 6px;
    height: 3px;
    margin: 1px;
    border: solid #333;
    border-width: 0 0 1px 1px;
    transform: rotate(-45deg);
  }
`;

// every bar leans the same way: 0.235px left for each px down
const LEAN = 0.235;
const PITCH = 23.68;
const topOf = (x, y) => x + LEAN * y;
const count = (n) => Array.from({ length: n }, (_, i) => i);

const frontLegs = count(23).map((i) => [856 - PITCH * i, 293 + 4.3 * i]);
const backLegs = count(19).map((i) => [804 - PITCH * i, 276 + 4.2 * i]);
const lapMarks = count(22).map((i) => [830 - 23.05 * i, 165 + 4.2 * i]);

const longBars = [
  [374, 156, 882, 66],
  [398, 163, 905, 73],
  [387, 104, 893, 13],
  [410, 112, 918, 21],
  [398, 59, 729, 0],
  [421, 66, 740, 5],
  [404, 28, 560, 0],
  [432, 38, 640, 0],
  [430, 40, 650, 0],
  [450, 49, 722, 0],
  [460, 49, 716, 3],
  [440, 0, 490, 14],
];

const edges = [
  "M397 0L358 163L398 177L915 84L935 0",
  "M915 84L875 72L891 0",
  "M398 177L429 49L463 60L799 0",
  "M463 60L472 23L489 29L493 10L461 0",
  "M489 29L652 0M472 23L599 0M493 10L553 0",
];

const Model = () => (
  <Scene>
    <g stroke="#9f8f87" strokeWidth="2" fill="none" shapeRendering="crispEdges">
      {frontLegs.map((foot, i) => (
        <path key={i} d={`M${topOf(...foot)} 0L${foot.join(" ")}`} />
      ))}
      {backLegs.map((foot, i) => (
        <path key={i} d={`M${topOf(...foot)} 0L${foot.join(" ")}L${frontLegs[i].join(" ")}`} />
      ))}
      {lapMarks.map(([x, y], i) => (
        <path key={i} d={`M${x} ${y}l-6 26M${x - 1} ${y + 6}l-5 24`} />
      ))}
      {longBars.map(([x1, y1, x2, y2]) => (
        <path key={`${x1}-${y1}`} d={`M${x1} ${y1}L${x2} ${y2}`} />
      ))}
      <path d="M320 257L309 305M892 0L849 190" />
    </g>
    <g stroke="#fff" strokeWidth="2" fill="none" shapeRendering="crispEdges">
      {edges.map((d) => (
        <path key={d} d={d} />
      ))}
      <path d="M875 72L358 163M429 49L700 0" strokeDasharray="9 2" />
    </g>
    <g stroke="#6a6a6a" fill="none">
      <circle cx="576" cy="152" r="135" />
      <circle cx="576" cy="17" r="8" />
      <circle cx="576" cy="287" r="8" />
      <circle cx="441" cy="152" r="8" />
      <circle cx="711" cy="152" r="8" />
      <path d="M561 287h30M576 279v16" />
    </g>
    <g strokeWidth="4" shapeRendering="crispEdges">
      <path d="M55 254L69 252" stroke="#f00" />
      <path d="M71 249h3v3l-2 3M54 243l8 7M62 244l-3 6" stroke="#f00" strokeWidth="1" fill="none" />
      <path d="M55 254L22 244" stroke="#0f0" />
      <path d="M12 242l12-3-3 8z" fill="#0f0" />
      <path d="M20 238l9 8M29 238l-6 7" stroke="#0f0" strokeWidth="1" />
      <path d="M55 254L64 216" stroke="#0080ff" />
      <path d="M66 206l2 14-8-1z" fill="#0080ff" />
      <path d="M59 203.500h9L59 212h7" stroke="#0080ff" strokeWidth="1" fill="none" />
    </g>
  </Scene>
);

/* ---------- snap bar ---------- */

const Caption = styled.span`
  flex: none;
  width: ${(p) => p.$w}px;
  color: ${(p) => (p.$dark ? "#000" : "#7a7a7a")};
`;

const RotateToggle = styled.label`
  display: flex;
  align-items: center;
  gap: 8px;
  width: 48px;
`;

const Spin = styled.span`
  flex: none;
  display: flex;
  align-items: center;
  width: ${(p) => p.$w}px;
  height: 23px;
  margin-right: 2px;
  border: 1px solid #7a7a7a;
  background: #f4f4f4;

  input {
    flex: 1;
    min-width: 0;
    padding: 0 10px 2px 0;
    border: 0;
    background: none;
    color: #838383;
    text-align: right;
  }
  i {
    display: flex;
    flex-direction: column;
    gap: 7px;
    margin-right: 4px;
  }
  i::before,
  i::after {
    content: "";
    border: 3px solid transparent;
    border-top: 0;
    border-bottom-color: #606060;
  }
  i::after {
    border-top: 3px solid #606060;
    border-bottom: 0;
  }
`;

const SpinBox = ({ label, value, w }) => (
  <Spin $w={w}>
    <input aria-label={label} defaultValue={value} />
    <i />
  </Spin>
);

const SnapBar = () => (
  <Toolbar $h={31}>
    <Strip>
      <Grip />
      <Tools
        items={[
          { icon: "ortho", text: "正交", w: 48 },
          { icon: "snapHand", text: "对象捕捉", w: 75, on: true },
          { icon: "dynInput", text: "动态输入", w: 75, on: true },
        ]}
      />
    </Strip>
    <Strip $ml={1}>
      <Grip />
      <Tools
        items={[
          { icon: "cross", text: "交点", w: 49 },
          { icon: "perp", text: "垂点", w: 51, on: true },
          { icon: "mid", text: "中点", w: 51, on: true },
          3,
          { icon: "vertex", text: "顶点", w: 51 },
          { icon: "coord", text: "坐标", w: 48 },
        ]}
      />
    </Strip>
    <Strip $ml={1}>
      <Grip $gap={3} />
      <Combo label="偏移方式" value="不偏移" w={59} />
      <Separator />
      <Caption $w={18}>X=</Caption>
      <SpinBox label="X" value="0" w={58} />
      <Caption $w={26}>mm</Caption>
      <Caption $w={18}>Y=</Caption>
      <SpinBox label="Y" value="0" w={58} />
      <Caption $w={24}>mm</Caption>
      <Separator />
      <RotateToggle>
        <Check />
        旋转
      </RotateToggle>
      <SpinBox label="旋转角度" value="0.000" w={68} />
      <Caption $w={8}>°</Caption>
    </Strip>
  </Toolbar>
);

/* ---------- rebar table ---------- */

const EditPane = styled.section`
  flex: none;
  display: flex;
  height: 202px;
`;

const DockGrip = styled.div`
  flex: none;
  width: 12px;
  padding-top: 2px;

  &::after {
    content: "";
    display: block;
    width: 10px;
    height: 182px;
    margin: 3px 0 0 1px;
    background: radial-gradient(#b8b8b8 1px, transparent 2px) 0 0 / 5px 5px;
  }
`;

const EditMain = styled.div`
  flex: 1;
  min-width: 0;
  display: flex;
  flex-direction: column;
`;

const Sheet = styled.div`
  flex: 1;
  min-height: 0;
  display: grid;
  grid-template: 1fr 16px / 1fr 18px;
  margin-right: 1px;
  padding: 1px 1px 0;
  border: 1px solid #a0a0a0;
  background: #fff;
`;

const Clip = styled.div`
  overflow: hidden;
`;

const Table = styled.table`
  width: 1140px;
  table-layout: fixed;
  border-collapse: collapse;
  font-family: ${songFont};

  th,
  td {
    padding: 0 2px;
    border: solid #c0c0c0;
    border-width: 0 1px 1px 0;
    font-weight: 400;
    text-align: left;
    white-space: nowrap;
  }
  td {
    background: #ccffd9;
  }
  thead th {
    height: 19px;
    text-align: center;
    background: linear-gradient(#fff, #f0f0f0);
  }
  td:nth-child(2) {
    border-right-color: #000;
  }
  thead th:nth-child(3) {
    background: linear-gradient(#fbd490, #f5bf64);
    color: #600040;
  }
  tbody tr {
    height: 61px;
  }
  tbody tr:last-child {
    height: 27px;
  }
  tbody th {
    padding-right: 8px;
    text-align: center;
    background: linear-gradient(90deg, #fff, #f2f2f2);
  }
  tbody tr:first-child th {
    padding-right: 2px;
    background: #ffd48c;
    color: #600040;
  }
  tbody tr:first-child td:nth-child(3) {
    background: #aeead9;
  }
  svg {
    display: block;
    overflow: visible;
    font-size: 12px;
  }
`;

const HScroll = styled.div`
  display: flex;
  align-items: center;
  background: #f0f0f0;

  span {
    height: 15px;
  }
`;

const Corner = styled.div`
  background: #f0f0f0;
`;

const GradeMark = styled.svg`
  margin: 0 auto;
`;

const columns = [
  ["", 33],
  ["筋号", 72],
  ["直径(mm)", 56],
  ["级别", 36],
  ["图号", 33],
  ["图形", 201],
  ["计算公式", 166],
  ["公式描述", 156],
  ["长度(mm)", 61],
  ["根数", 38],
  ["搭接", 39],
  ["损耗(%)", 49],
  ["单重(kg)", 61],
  ["总重(kg)", 61],
  ["钢筋归类", 78],
];

const Grade = () => (
  <GradeMark width="12" height="12" viewBox="0 0 12 12">
    <path d="M6.500 1v10M3 3.500h7M3 7.500h7M2 5.500h9M2.500 4v3M10.500 4v3M4 9.500h5" fill="none" stroke="#000" strokeWidth=".8" />
  </GradeMark>
);

const ShapeOne = () => (
  <svg width="196" height="60">
    <path d="M92 12H107V57" fill="none" stroke="#000" strokeWidth="2" />
    <text x="90" y="24">240</text>
    <text transform="translate(94 27) rotate(90)">30416</text>
    <text transform="translate(94 4) rotate(90)">180</text>
    <text transform="translate(105 20) rotate(-90)">120</text>
  </svg>
);

const ShapeTwo = () => (
  <svg width="196" height="60">
    <path d="M94 12V48H99V38" fill="none" stroke="#000" strokeWidth="2" />
    <circle cx="93" cy="14" r="2" fill="none" stroke="#000" />
    <text x="85" y="24">204100</text>
    <text transform="translate(82 10) rotate(90)">1061</text>
    <text transform="translate(104 14) rotate(-90)">120</text>
    <text transform="translate(112 42) rotate(-90)">300</text>
    <text x="98" y="61">158</text>
  </svg>
);

const ShapeThree = () => (
  <svg width="196" height="26">
    <text x="88" y="17" fill="#f00">3050</text>
  </svg>
);

const rebars = [
  ["1*", "横向钢筋.1", "8", <Grade />, "0", <ShapeOne />, "745+40*d", "净长+端头", "1065", "23", "0", "0", "0.421", "9.676", "直筋"],
  ["2", "横向钢筋.2", "8", <Grade />, "0", <ShapeTwo />, "1543+300", "净长+端头", "1843", "23", "0", "0", "0.728", "16.744", "直筋"],
  ["3", "水平纵筋.1", "8", <Grade />, "1", <ShapeThree />, "3370", "净长", "3370", "10", "0", "0", "1.331", "16.688", "直筋"],
];

const RebarTable = () => (
  <Table>
    <colgroup>
      {columns.map(([name, w]) => (
        <col key={name} width={w} />
      ))}
    </colgroup>
    <thead>
      <tr>
        {columns.map(([name]) => (
          <th key={name}>{name}</th>
        ))}
      </tr>
    </thead>
    <tbody>
      {rebars.map(([no, ...cells]) => (
        <tr key={no}>
          <th>{no}</th>
          {cells.map((cell, i) => (
            <td key={i}>{cell}</td>
          ))}
        </tr>
      ))}
    </tbody>
  </Table>
);

const EditPanel = () => (
  <EditPane>
    <DockGrip>
      <Svg width="10" height="10" viewBox="0 0 10 10">
        <path d="M.5.5h9v9h-9zM2 2l6 6M8 2L2 8" fill="none" stroke="#444" />
      </Svg>
    </DockGrip>
    <EditMain>
      <Toolbar $h={29}>
        <Strip $pad={3} $grow>
          <Tools
            items={[
              { icon: "firstDim", w: 25 },
              { icon: "prevDim", w: 23 },
              { icon: "next", w: 25 },
              { icon: "last", w: 20 },
              "|",
              { icon: "upDim", w: 24 },
              { icon: "down", w: 22 },
              "|",
              { icon: "insertDim", text: "插入", w: 51, dim: true },
              { icon: "removeDim", text: "删除", w: 52, dim: true },
              { icon: "scaleDim", text: "缩尺配筋", w: 74, dim: true },
              { icon: "barInfo", text: "钢筋信息", w: 75 },
              { icon: "barLib", text: "钢筋图库", w: 75 },
              { icon: "other", text: "其他", w: 53, menu: true, flush: true },
              7,
              { text: "关闭", w: 33 },
              "|",
            ]}
          />
          <span>单构件钢筋总重(kg) : 43.108</span>
        </Strip>
      </Toolbar>
      <Sheet>
        <Clip>
          <RebarTable />
        </Clip>
        <VScroll>
          <ArrowMark d={UP} />
          <Thumb $flex={23} />
          <Track $flex={95} />
          <ArrowMark d={DOWN} />
        </VScroll>
        <HScroll>
          <ArrowMark d={LEFT} />
          <Thumb $flex={720} />
          <Track $flex={365} />
          <ArrowMark d={RIGHT} />
        </HScroll>
        <Corner />
      </Sheet>
    </EditMain>
  </EditPane>
);

/* ---------- workspace ---------- */

const Body = styled.main`
  flex: 1;
  min-height: 0;
  display: flex;
`;

const Workspace = styled.div`
  flex: 1;
  min-width: 0;
  display: flex;
  flex-direction: column;
`;

const EditToolbar = () => (
  <Toolbar $h={27}>
    <Strip $w={791}>
      <Grip />
      <Tools
        items={[
          { icon: "brushDim", text: "删除", w: 52, dim: true },
          "|",
          { icon: "copyDim", text: "复制", w: 51, dim: true },
          { icon: "mirrorDim", text: "镜像", w: 51, dim: true },
          "|",
          { icon: "moveDim", text: "移动", w: 51, dim: true },
          { icon: "rotateDim", text: "旋转", w: 51, dim: true },
          "|",
          { icon: "extendDim", text: "延伸", w: 51, dim: true },
          { icon: "trimDim", text: "修剪", w: 51, dim: true },
          "|",
          { icon: "breakDim", text: "打断", w: 51, dim: true },
          { icon: "mergeDim", text: "合并", w: 50, dim: true },
          { icon: "splitDim", text: "分割", w: 51, dim: true },
          "|",
          { icon: "alignDim", text: "对齐", w: 58, dim: true, menu: true },
          { icon: "offsetDim", text: "偏移", w: 51, dim: true },
          { icon: "stretchDim", text: "拉伸", w: 51, dim: true },
          "|",
          { icon: "gripDim", text: "设置夹点", w: 75, dim: true },
        ]}
      />
    </Strip>
  </Toolbar>
);

const ElementToolbar = () => (
  <Toolbar $h={28}>
    <Strip $w={568}>
      <Grip $gap={4} />
      <Combo label="楼层" value="第4层" w={58} />
      <Combo label="构件类型" value="自定义" w={71} />
      <Combo label="构件" value="自定义线" w={71} />
      <Combo label="构件名称" value="ZDYX-14" w={71} />
      <Tools
        items={[
          2,
          "|",
          { icon: "props", text: "属性", w: 49 },
          { icon: "editBar", text: "编辑钢筋", w: 75, on: true },
          3,
          { icon: "listPane", text: "构件列表", w: 75 },
          { icon: "dropper", text: "拾取构件", w: 74 },
        ]}
      />
    </Strip>
    <Strip $ml={74} $w={422}>
      <Grip />
      <Tools
        items={[
          { icon: "axisTwo", text: "两点", w: 51 },
          { icon: "axisPar", text: "平行", w: 51 },
          { icon: "axisAngle", text: "点角", w: 62, menu: true },
          { icon: "axisThree", text: "三点辅轴", w: 87, menu: true },
          { icon: "brush", text: "删除辅轴", w: 75 },
          { icon: "dim", text: "尺寸标注", w: 87, menu: true },
        ]}
      />
    </Strip>
  </Toolbar>
);

const DrawToolbar = () => (
  <Toolbar $h={29}>
    <Strip>
      <Grip />
      <Tools
        items={[
          { icon: "cursor", text: "选择", w: 64, menu: true },
          "|",
          { icon: "line", text: "直线", w: 50 },
          { icon: "arcLen", text: "点加长度", w: 76 },
          { icon: "arc", text: "三点画弧", w: 85, menu: true },
        ]}
      />
      <Combo label="弧参数" value="" w={55} />
      <Tools
        items={[
          4,
          { icon: "rect", text: "矩形", w: 50 },
          "|",
          { icon: "smart", text: "智能布置", w: 81, menu: true },
        ]}
      />
    </Strip>
    <Strip $w={31} $ml={2}>
      <Grip />
    </Strip>
  </Toolbar>
);

const checks = ["水平纵筋", "横向钢筋", "显示其它图元", "显示详细公式"];

/* ---------- status bar and taskbar ---------- */

const StatusBar = styled.footer`
  position: relative;
  display: flex;
  gap: 2px;
  height: 22px;
  padding: 1px 0;
  font-family: ${songFont};
`;

const StatusCell = styled.span`
  ${(p) => (p.$w ? `width: ${p.$w}px;` : "flex: 1;")}
  padding: 1px;
  border: 1px solid #d0d0d0;
  background: linear-gradient(#fff, #f0f0f0);
  white-space: nowrap;
`;

const ImeBar = styled.div`
  position: absolute;
  right: 0;
  bottom: 0;
  display: flex;
  align-items: center;
  gap: 8px;
  height: 24px;
  padding: 0 3px 0 0;
  border: 1px solid #b8d0e4;
  border-left: 0;
  background: #fafcff;
  color: #1c74c8;
  font: 700 14px/16px ${uiFont};
`;

const TaskBar = styled.footer`
  flex: none;
  display: flex;
  height: 40px;
  background: #040c10;
  color: #fff;
`;

const StartButton = styled.button`
  width: 48px;
  padding: 0;
  border: 0;
  background: #000;
  display: grid;
  place-items: center;
`;

const SearchBox = styled.label`
  display: flex;
  align-items: center;
  width: 344px;
  padding: 0 13px 0 9px;
  background: #333;
  color: #a8a8a8;

  input {
    flex: 1;
    min-width: 0;
    padding: 0 0 0 5px;
    border: 0;
    background: none;
    font-size: 14px;
  }
  input::placeholder {
    color: #a0a0a0;
    opacity: 1;
  }
`;

const TaskButton = styled.button`
  display: grid;
  place-items: center;
  width: 48px;
  margin: 0 1px 0 ${(p) => p.$gap || 0}px;
  padding: 3px 0 0;
  border: 0;
  border-bottom: 3px solid ${(p) => (p.$running ? "#76b9ed" : "transparent")};
  background: ${(p) => (p.$active ? "#3a4144" : "none")};
  background-clip: padding-box;
`;

const Tray = styled.div`
  display: flex;
  align-items: center;
  margin-left: auto;
  white-space: nowrap;
`;

const TrayText = styled.div`
  width: ${(p) => p.$w}px;
  line-height: 18px;
  text-align: center;
`;

const TrayItem = styled.span`
  width: ${(p) => p.$w}px;
  display: grid;
  place-items: center;
  font-weight: 700;
`;

const Notices = styled.button`
  width: 54px;
  height: 40px;
  margin-right: 4px;
  padding: 0;
  border: 0;
  border-right: 1px solid #555;
  background: #000;
  display: grid;
  place-items: center;
`;

const Sogou = ({ size }) => (
  <Svg width={size} height={size} viewBox="0 0 28 28">
    <path d="M4 4L22 1a3 3 0 0 1 3.500 2.500L28 20a3 3 0 0 1-2.500 3.500L8 27a3 3 0 0 1-3.500-2.500L1 8a3 3 0 0 1 3-4z" fill="#f04c20" />
    <path d="M21 7.500C15 5 8 7 8.500 11c.5 3.500 11 2 11.500 5.500.5 4-8 4.500-13 2.500" fill="none" stroke="#fff" strokeWidth="4" />
  </Svg>
);

const taskApps = [
  {
    gap: 2,
    draw: (
      <g fill="#e8e8e8">
        <path d="M12 12V7Q12 2 7 2 2 3 2 8q1 5 6 5zM14 12h5q5 0 5-5-1-5-6-5-5 1-5 6zM14 14v5q0 5 5 5 5-1 5-6-1-5-6-5zM12 14H7q-5 0-5 5 1 5 6 5 5-1 5-6z" />
      </g>
    ),
  },
  {
    draw: (
      <>
        <path d="M20 10c-5-6-15-4-16 4s9 12 15 7c3-4 1-9-4-8-5 0-6 6-2 6s4-4 1-4M6 17c-2-8 7-13 12-8" fill="none" stroke="#ddd" strokeWidth="1.200" />
        <path d="M16 9c3-2 2-10 6-10s3 8 6 10zM20 10h4v2h-4z" fill="#e0a010" />
      </>
    ),
  },
  { gap: 5, node: <FaEdgeLegacy size={22} color="#0078d7" /> },
  {
    draw: (
      <>
        <path d="M2 8l20-2v19L2 22z" fill="#fff" />
        <path d="M8 8c0-8 8-8 8 0" fill="none" stroke="#fff" strokeWidth="1.500" />
        <path d="M5 11.500l5-.6v4H5zM11 10.800l6-.8v5h-6zM5 16h5v4l-5-.7zM11 16h6v5l-6-.8z" fill="#111" />
      </>
    ),
  },
  {
    draw: (
      <>
        <path d="M2 5h8l2 2h12v15H2z" fill="#f0c050" />
        <path d="M2 8h22v14H2z" fill="#fde9a0" />
        <path d="M6 23v-8h14v8h-4v-4h-6v4z" fill="#38a8e0" />
      </>
    ),
  },
  {
    running: true,
    draw: (
      <path d="M25 2q-2 6-8 5C10 5 7 8 7 13s5 8 9 6q4-2 3-6h-6q4-4 10-2c2 9-4 14-11 14C-1 24 0 3 15 3q7 1 10-1z" fill="#1e9cf0" />
    ),
  },
  {
    running: true,
    draw: (
      <>
        <circle cx="13" cy="13" r="10.500" fill="#5cc030" stroke="#e8f8e0" strokeWidth="1.500" />
        <path d="M7 13h12a6 6 0 1 0-2 5" fill="none" stroke="#fff" strokeWidth="2.500" />
        <path d="M4 24Q1 8 24 2" fill="none" stroke="#50b828" strokeWidth="1.300" />
      </>
    ),
  },
  {
    running: true,
    active: true,
    draw: (
      <>
        <rect x="1" y="1" width="24" height="24" rx="4" fill="#0a8cf0" />
        <path d="M16 7q-3-2-3 2v8q0 3 3.500 3M5.500 11q0 3 3 3H17q3.500 0 3-3.500" fill="none" stroke="#fff" strokeWidth="2" />
      </>
    ),
  },
  {
    running: true,
    draw: (
      <>
        <rect x="1" y="1" width="24" height="24" rx="2" fill="#f09818" />
        <path d="M4 6l13-2 3 14-13 4z" fill="#fff" />
        <path d="M7 9l8-1M8 12l8-1M9 15l6-1" stroke="#555" strokeWidth="1.500" />
        <path d="M23 2l-8 13" stroke="#8a3810" strokeWidth="2.500" />
      </>
    ),
  },
];

const WindowsTaskBar = () => (
  <TaskBar>
    <StartButton aria-label="开始">
      <FaWindows size={17} color="#fff" />
    </StartButton>
    <SearchBox>
      <Svg width="22" height="22" viewBox="0 0 22 22">
        <circle cx="11" cy="11" r="9" fill="none" stroke="#fff" strokeWidth="2.500" />
      </Svg>
      <input aria-label="搜索" placeholder="在这里输入你要搜索的内容" />
      <Mic size={16} strokeWidth={1.5} />
    </SearchBox>
    {taskApps.map((app, i) => (
      <TaskButton key={i} $gap={app.gap} $running={app.running} $active={app.active}>
        {app.node || (
          <Svg width="26" height="26" viewBox="0 0 26 26" overflow="visible">
            {app.draw}
          </Svg>
        )}
      </TaskButton>
    ))}
    <Tray>
      <TrayText $w={80}>
        56%
        <br />
        CPU使用
      </TrayText>
      <TrayItem $w={22}>
        <Svg width="12" height="8" viewBox="0 0 12 8">
          <path d="M1 7l5-5 5 5" fill="none" stroke="#fff" strokeWidth="1.300" />
        </Svg>
      </TrayItem>
      <TrayItem $w={25}>
        <Svg width="17" height="14" viewBox="0 0 17 14">
          <path d="M5.500 4.500h9v7h-9zM15 7h1.500v2.500H15" fill="none" stroke="#fff" />
          <path d="M7 6h6v4H7zM1 3h5v3q0 2-2.500 2T1 6zM2 0h1v3H2zM4 0h1v3H4zM3 8h1v4H3z" fill="#fff" />
        </Svg>
      </TrayItem>
      <TrayItem $w={24}>
        <Svg width="14" height="14" viewBox="0 0 14 14">
          <path d="M2 13A11 11 0 0 1 13 2M5 13a8 8 0 0 1 8-8M8 13a5 5 0 0 1 5-5" fill="none" stroke="#ddd" strokeWidth="1.200" />
          <path d="M10 13a3 3 0 0 1 3-3v3z" fill="#fff" />
        </Svg>
      </TrayItem>
      <TrayItem $w={23}>
        <Volume2 size={17} strokeWidth={1.5} />
      </TrayItem>
      <TrayItem $w={30}>
        <Svg width="23" height="14" viewBox="0 0 23 14">
          <path d="M.5.5h22v13H.5z" fill="none" stroke="#fff" />
          <path d="M3 3.500h17M3 6.500h17" stroke="#fff" strokeDasharray="2 1" />
          <path d="M6 10.500h11" stroke="#fff" />
        </Svg>
      </TrayItem>
      <TrayItem $w={28}>英</TrayItem>
      <TrayItem $w={28}>
        <Sogou size={17} />
      </TrayItem>
      <TrayText $w={74}>
        9:26
        <br />
        2017/9/6
      </TrayText>
    </Tray>
    <Notices aria-label="通知">
      <Svg width="26" height="26" viewBox="0 0 26 26">
        <path d="M1 3h16v12H9l-3 3v-3H1z" fill="#fff" />
        <path d="M3 6.500h12M3 9h12M3 11.500h12" stroke="#000" />
        <circle cx="17" cy="18" r="7.500" fill="#444" stroke="#888" />
        <text x="17" y="22" fontSize="11" fontWeight="700" textAnchor="middle" fill="#fff">
          2
        </text>
      </Svg>
    </Notices>
  </TaskBar>
);

const App = () => (
  <>
    <GlobalStyle />
    <Page>
      <TitleBar>
        <Icon name="logo" />
        <h1>
          广联达BIM钢筋算量软件 GGJ2013 -
          [C:\Users\Administrator.PC-201509210127NRHM\Desktop\白龙村-2016-08-25-13-27-07(2166版).GGJ12]
        </h1>
        <WindowButton aria-label="最小化">
          <Svg width="11" height="11">
            <path d="M0 5.500h10" stroke="#000" />
          </Svg>
        </WindowButton>
        <WindowButton aria-label="还原">
          <Svg width="11" height="11">
            <path d="M.5 2.500h7v7h-7zM2.500 2.500v-2h7v7h-2" fill="none" stroke="#000" />
          </Svg>
        </WindowButton>
        <WindowButton aria-label="关闭">
          <Svg width="11" height="11">
            <path d="M.5.5l10 10M10.500.5l-10 10" stroke="#000" />
          </Svg>
        </WindowButton>
        <SpeedBall>71</SpeedBall>
      </TitleBar>
      <MenuBar />
      <MainToolbar />
      <Body>
        <ModuleNavigator />
        <Workspace>
          <EditToolbar />
          <ElementToolbar />
          <DrawToolbar />
          <Viewport>
            <Model />
            <DisplayPanel>
              <p>钢筋显示控制面板</p>
              <div>
                {checks.map((label) => (
                  <CheckRow key={label}>
                    <Check defaultChecked />
                    {label}
                  </CheckRow>
                ))}
              </div>
            </DisplayPanel>
          </Viewport>
          <SnapBar />
          <EditPanel />
        </Workspace>
      </Body>
      <StatusBar>
        <StatusCell $w={148}>X=65663 Y=5229</StatusCell>
        <StatusCell $w={78}>层高:2.8m</StatusCell>
        <StatusCell $w={98}>底标高:10.27m</StatusCell>
        <StatusCell $w={48}>1(1)</StatusCell>
        <StatusCell />
        <ImeBar>
          <Sogou size={28} />
          英
          <Svg width="12" height="12" viewBox="0 0 12 12">
            <circle cx="3" cy="4" r="2" fill="#1c74c8" />
            <path d="M8 6.500h2.500v2L8.500 11" fill="none" stroke="#1c74c8" strokeWidth="1.500" />
          </Svg>
          <FaMicrophone size={14} />
          <FaKeyboard size={16} />
          <Svg width="15" height="16" viewBox="0 0 15 16">
            <circle cx="6" cy="4" r="3" fill="#b0bccc" />
            <path d="M0 15c0-9 12-9 12 0z" fill="#b0bccc" />
            <text x="5" y="15" fontSize="8" fill="#667">
              17
            </text>
          </Svg>
          <FaShirt size={14} />
          <FaWrench size={14} />
        </ImeBar>
      </StatusBar>
      <WindowsTaskBar />
    </Page>
  </>
);

export default App;
